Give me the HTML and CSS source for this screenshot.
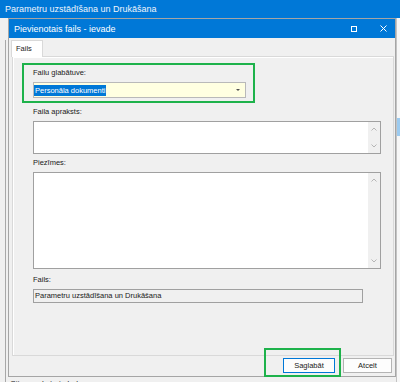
FILE: index.html
```html
<!DOCTYPE html>
<html lang="lv">
<head>
    <meta charset="UTF-8">
    <meta name="viewport" content="width=device-width, initial-scale=1.0">
    <title>Pievienotais fails - ievade</title>
    <link rel="stylesheet" href="styles.css">
</head>
<body>
    <!-- galvenais logs fonā -->
    <div class="app">
        <div class="app-title">Parametru uzstādīšana un Drukāšana</div>
        <div class="app-body">
            <div class="app-left"><div class="app-left-line"></div></div>
            <div class="app-main">
                <div class="app-footer">Citu sarakstu izdruka</div>
            </div>
            <div class="app-right"><div class="app-right-sel"></div></div>
        </div>
    </div>

    <!-- dialogs -->
    <div class="dialog">
        <div class="dialog-title">
            <span>Pievienotais fails - ievade</span>
            <div class="title-buttons">
                <svg width="6" height="6" viewBox="0 0 6 6"><rect x="0.5" y="0.5" width="5" height="5" fill="none" stroke="#fff" stroke-width="1"/></svg>
                <svg width="7" height="7" viewBox="0 0 7 7"><path d="M0.5 0.5L6.5 6.5M6.5 0.5L0.5 6.5" stroke="#fff" stroke-width="1"/></svg>
            </div>
        </div>

        <div class="tabs">
            <div class="tab">Fails</div>
        </div>

        <div class="panel">
            <div class="group">
                <label class="lbl">Failu glabātuve:</label>
                <div class="combo">
                    <span class="combo-sel">Personāla dokumenti</span>
                    <span class="combo-arrow"></span>
                </div>
            </div>

            <div class="field field-desc">
                <label class="lbl">Faila apraksts:</label>
                <div class="memo memo-desc">
                    <div class="scroll">
                        <svg width="6" height="4" viewBox="0 0 6 4"><path d="M0.5 3.5L3 1L5.5 3.5" fill="none" stroke="#b5b5b5"/></svg>
                        <svg width="6" height="4" viewBox="0 0 6 4"><path d="M0.5 0.5L3 3L5.5 0.5" fill="none" stroke="#b5b5b5"/></svg>
                    </div>
                </div>
            </div>

            <div class="field field-notes">
                <label class="lbl">Piezīmes:</label>
                <div class="memo memo-notes">
                    <div class="scroll">
                        <svg width="6" height="4" viewBox="0 0 6 4"><path d="M0.5 3.5L3 1L5.5 3.5" fill="none" stroke="#b5b5b5"/></svg>
                        <svg width="6" height="4" viewBox="0 0 6 4"><path d="M0.5 0.5L3 3L5.5 0.5" fill="none" stroke="#b5b5b5"/></svg>
                    </div>
                </div>
            </div>

            <div class="field field-file">
                <label class="lbl">Fails:</label>
                <div class="readonly">Parametru uzstādīšana un Drukāšana</div>
            </div>
        </div>

        <div class="buttons">
            <button class="btn btn-save">Saglabāt</button>
            <button class="btn btn-cancel">Atcelt</button>
        </div>

        <div class="mark"></div>
    </div>
</body>
</html>
```

FILE: styles.css
```css
* {
    box-sizing: border-box;
}
body {
    margin: 0;
    width: 400px;
    height: 382px;
    overflow: hidden;
    position: relative;
    background: #f0f0f0;
    font-family: "Liberation Sans", Arial, sans-serif;
    font-size: 7.5px;
    color: #1a1a1a;
}

/* fona logs */
.app-title {
    height: 18px;
    line-height: 18px;
    padding-left: 5px;
    background: #0078d7;
    color: #eef5fc;
    font-size: 9px;
}
.app-body {
    display: flex;
    height: 364px;
}
.app-left {
    width: 8px;
    padding-top: 22px;
}
.app-left-line {
    width: 6px;
    height: 100%;
    border-right: 1px solid #a8a8a8;
}
.app-main {
    flex: 1;
    display: flex;
    flex-direction: column;
    justify-content: flex-end;
}
.app-footer {
    line-height: 13px;
    margin-bottom: -8px;
    padding-left: 2px;
    font-size: 8px;
    color: #222;
}
.app-right {
    width: 4px;
    border-left: 1px solid #c4c4c4;
    background: #f7f7f7;
    padding-top: 100px;
}
.app-right-sel {
    height: 18px;
    background: #9ccbf0;
}

/* dialogs */
.dialog {
    position: absolute;
    left: 8px;
    top: 18px;
    width: 388px;
    height: 359px;
    border: 1px solid #a5a5a5;
    background: #f0f0f0;
    display: flex;
    flex-direction: column;
}
.dialog-title {
    height: 19px;
    flex-shrink: 0;
    background: #0078d7;
    color: #fff;
    font-size: 9px;
    display: flex;
    align-items: center;
    justify-content: space-between;
    padding: 0 8px 0 5px;
}
.title-buttons {
    display: flex;
    align-items: center;
    gap: 23px;
}
.title-buttons svg {
    display: block;
}

.tabs {
    height: 18px;
    flex-shrink: 0;
    display: flex;
    padding: 2px 0 0 2px;
}
.tab {
    width: 32px;
    height: 17px;
    background: #fff;
    border: 1px solid #d9d9d9;
    border-bottom: none;
    padding-left: 4px;
    line-height: 15px;
    position: relative;
    z-index: 1;
}

.panel {
    height: 300px;
    flex-shrink: 0;
    margin: 0 1px 0 3px;
    border: 1px solid #d9d9d9;
    box-shadow: inset 1px 1px 0 #fff;
    padding: 6px 12px 0 20px;
}

.group {
    width: 233px;
    margin-left: -11px;
    border: 2px solid #1eb24b;
    padding: 3px 7px 3px 9px;
}
.lbl {
    display: block;
    line-height: 10px;
    margin-bottom: 4px;
}
.combo {
    height: 16px;
    border: 1px solid #b9b9b9;
    background: #ffffe1;
    display: flex;
    align-items: center;
    justify-content: space-between;
    padding-right: 5px;
}
.combo-sel {
    background: #0078d7;
    color: #fff;
    line-height: 11px;
    padding: 0 1px;
}
.combo-arrow {
    width: 0;
    height: 0;
    border-left: 2.5px solid transparent;
    border-right: 2.5px solid transparent;
    border-top: 2.5px solid #505050;
}

.field-desc {
    margin-top: 4px;
}
.field-notes {
    margin-top: 4px;
}
.field-file {
    margin-top: 6px;
}

.memo {
    display: flex;
    justify-content: flex-end;
    background: #fff;
    border: 1px solid #a0a0a0;
}
.memo-desc {
    height: 33px;
}
.memo-notes {
    height: 97px;
}
.scroll {
    width: 12px;
    background: #f0f0f0;
    display: flex;
    flex-direction: column;
    justify-content: space-between;
    align-items: center;
    padding: 5px 0 5px;
}
.scroll svg {
    display: block;
}

.readonly {
    width: 330px;
    height: 14px;
    border: 1px solid #a0a0a0;
    background: #f0f0f0;
    padding-left: 1px;
    line-height: 12px;
}

.buttons {
    display: flex;
    justify-content: flex-end;
    gap: 8px;
    margin-top: 2px;
    padding-right: 3px;
}
.btn {
    height: 15px;
    padding: 0;
    font: inherit;
    color: #1a1a1a;
    background: #fdfdfd;
    border: 1px solid #b4b4b4;
}
.btn-save {
    width: 52px;
    border-color: #0078d7;
}
.btn-cancel {
    width: 49px;
}

/* zaļais iezīmējums ap pogu */
.mark {
    position: absolute;
    left: 255px;
    top: 329px;
    width: 77px;
    height: 29px;
    border: 2px solid #1eb24b;
}
```
